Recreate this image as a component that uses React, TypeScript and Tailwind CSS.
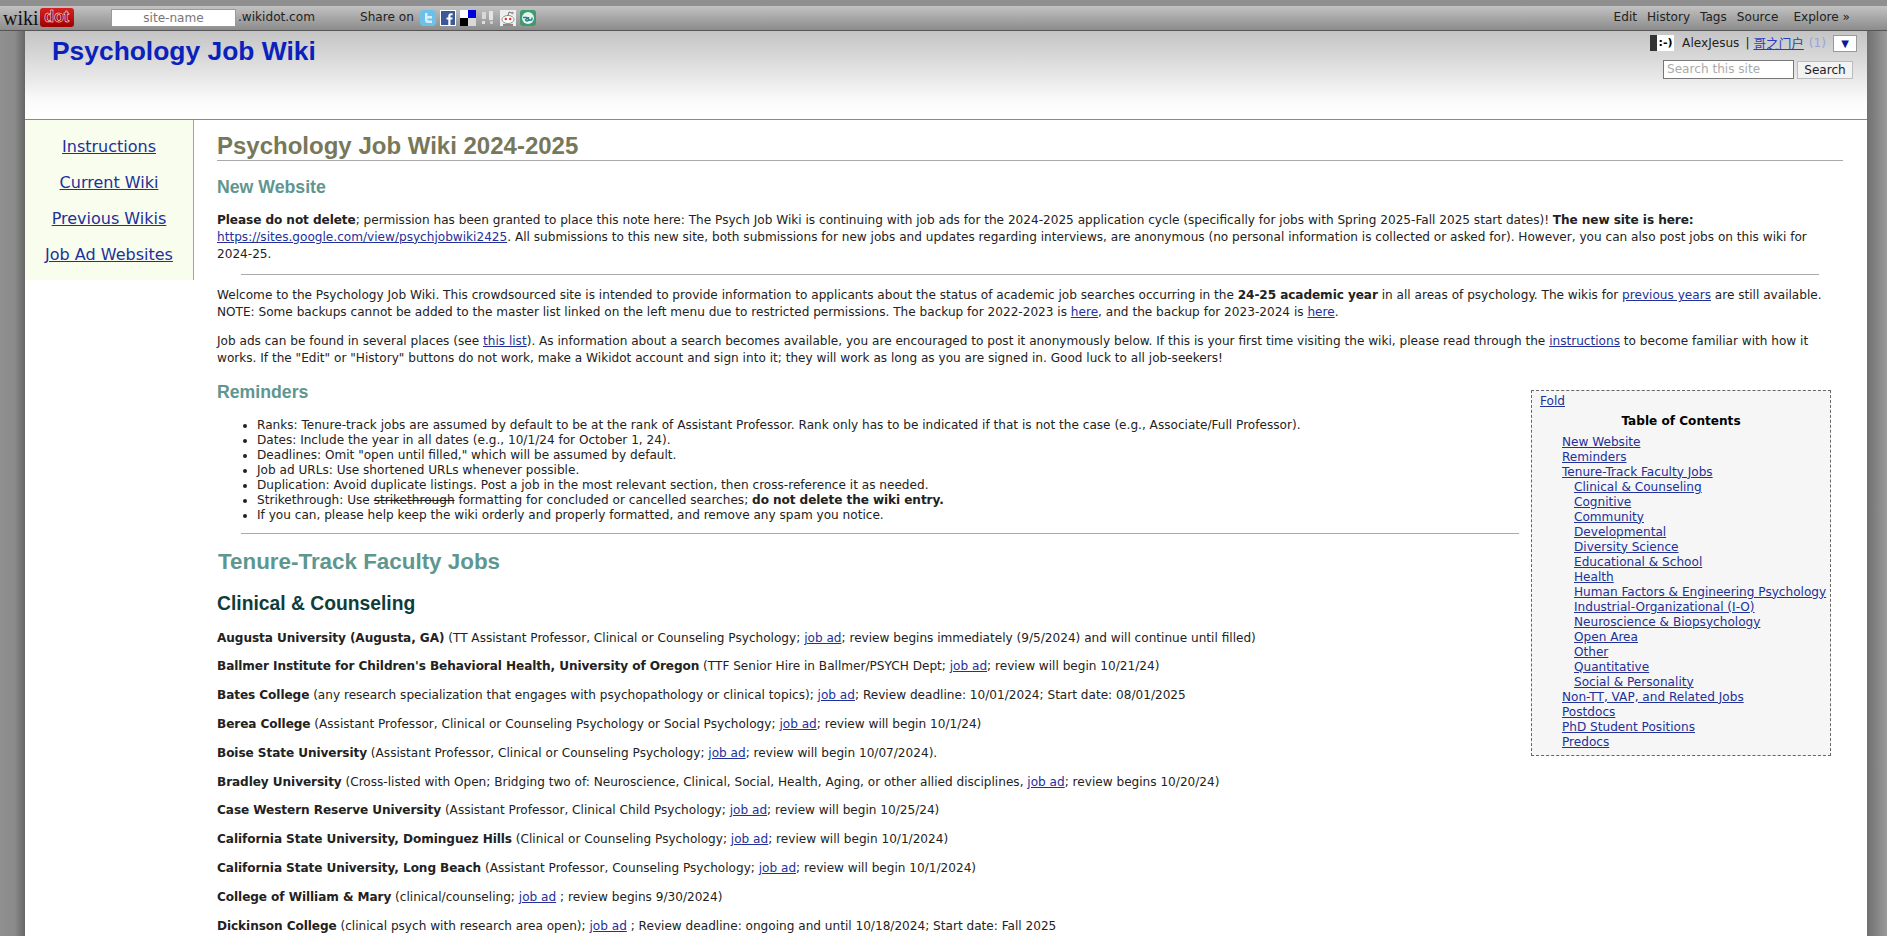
import React from "react";

const L = ({ children }: { children: React.ReactNode }) => (
  <a className="text-[#22309a] underline">{children}</a>
);

const B = ({ children }: { children: React.ReactNode }) => (
  <b className="tracking-[-0.080px]">{children}</b>
);

const jobs: [string, string, string][] = [
  ["Augusta University (Augusta, GA)", " (TT Assistant Professor, Clinical or Counseling Psychology; ", "; review begins immediately (9/5/2024) and will continue until filled)"],
  ["Ballmer Institute for Children's Behavioral Health, University of Oregon", " (TTF Senior Hire in Ballmer/PSYCH Dept; ", "; review will begin 10/21/24)"],
  ["Bates College", " (any research specialization that engages with psychopathology or clinical topics); ", "; Review deadline: 10/01/2024; Start date: 08/01/2025"],
  ["Berea College", " (Assistant Professor, Clinical or Counseling Psychology or Social Psychology; ", "; review will begin 10/1/24)"],
  ["Boise State University", " (Assistant Professor, Clinical or Counseling Psychology; ", "; review will begin 10/07/2024)."],
  ["Bradley University", " (Cross-listed with Open; Bridging two of: Neuroscience, Clinical, Social, Health, Aging, or other allied disciplines, ", "; review begins 10/20/24)"],
  ["Case Western Reserve University", " (Assistant Professor, Clinical Child Psychology; ", "; review will begin 10/25/24)"],
  ["California State University, Dominguez Hills", " (Clinical or Counseling Psychology; ", "; review will begin 10/1/2024)"],
  ["California State University, Long Beach", " (Assistant Professor, Counseling Psychology; ", "; review will begin 10/1/2024)"],
  ["College of William & Mary", " (clinical/counseling; ", " ; review begins 9/30/2024)"],
  ["Dickinson College", " (clinical psych with research area open); ", " ; Review deadline: ongoing and until 10/18/2024; Start date: Fall 2025"],
];

const toc: [string, boolean][] = [
  ["New Website", false], ["Reminders", false], ["Tenure-Track Faculty Jobs", false],
  ["Clinical & Counseling", true], ["Cognitive", true], ["Community", true], ["Developmental", true],
  ["Diversity Science", true], ["Educational & School", true], ["Health", true],
  ["Human Factors & Engineering Psychology", true], ["Industrial-Organizational (I-O)", true],
  ["Neuroscience & Biopsychology", true], ["Open Area", true], ["Other", true], ["Quantitative", true],
  ["Social & Personality", true], ["Non-TT, VAP, and Related Jobs", false], ["Postdocs", false],
  ["PhD Student Positions", false], ["Predocs", false],
];

const sans = "font-['Liberation_Sans',Arial,sans-serif]";

const ShareIcons = () => (
  <div className="flex items-center gap-1">
    <svg width="16" height="16" viewBox="0 0 16 16">
      <rect width="16" height="16" rx="4" fill="#6cc0ea" />
      <path d="M5 3v7c0 2 1 3 3 3h4v-2.500H8.500C7.800 10.500 7.500 10 7.500 9.500V8.500H12V6H7.500V3z" fill="#d8f0fb" />
    </svg>
    <svg width="16" height="16" viewBox="0 0 16 16">
      <rect width="16" height="16" fill="#fff" />
      <rect x="1" y="1" width="14" height="14" fill="#3b5998" />
      <path d="M10.500 15V9.500h1.800l.3-2h-2.100V6.200c0-.6.2-1 1-1h1.100V3.300c-.2 0-.8-.1-1.600-.1-1.600 0-2.700 1-2.700 2.800v1.500H6.500v2h1.800V15z" fill="#fff" />
    </svg>
    <svg width="16" height="16" viewBox="0 0 16 16">
      <rect x="8" y="0" width="8" height="8" fill="#0000dd" />
      <rect x="0" y="8" width="8" height="8" fill="#000" />
      <rect x="0" y="0" width="8" height="8" fill="#fff" />
      <rect x="8" y="8" width="8" height="8" fill="#d8d8d8" />
    </svg>
    <svg width="16" height="16" viewBox="0 0 16 16">
      <rect x="2" y="2" width="4" height="7" fill="#d8d8d8" />
      <rect x="9" y="1" width="4" height="9" fill="#e4e4e4" />
      <rect x="2" y="11" width="3" height="3" fill="#ddd" />
      <rect x="10" y="11" width="3" height="3" fill="#ccc" />
    </svg>
    <svg width="16" height="16" viewBox="0 0 16 16">
      <rect width="16" height="16" fill="#eee" />
      <ellipse cx="8" cy="9.500" rx="6" ry="4" fill="#fff" stroke="#777" strokeWidth="0.800" />
      <circle cx="5.800" cy="9" r="1.200" fill="#d4321c" />
      <circle cx="10.200" cy="9" r="1.200" fill="#d4321c" />
      <path d="M8 5.500 9 2l3 1" stroke="#555" fill="none" strokeWidth="0.800" />
      <circle cx="12.500" cy="3" r="1.200" fill="#999" />
      <path d="M3 14h10v2H3z" fill="#888" />
    </svg>
    <svg width="16" height="16" viewBox="0 0 16 16">
      <rect width="16" height="16" rx="3" fill="#3f9a6e" />
      <circle cx="8" cy="8" r="6" fill="#e4f4ee" />
      <path d="M3 7.500h3.500c.8 0 .8 1 0 1.500C5 10 5.500 11 7 11c1 0 1.500-1 1.500-2V7M8.500 7v2c0 1.500 3.500 1.500 3.500 0V7.500" stroke="#2a7f8f" strokeWidth="1.500" fill="none" />
    </svg>
  </div>
);

export default function App() {
  return (
    <div className="h-screen overflow-hidden flex flex-col bg-[#8a8a8a] font-['DejaVu_Sans',Verdana,sans-serif] text-[12.100px] text-[#222]">
      <div className="h-[6px] shrink-0 bg-[#8f8f8f]" />
      <div className="h-[25px] shrink-0 flex items-center bg-gradient-to-b from-[#c2c2c2] to-[#8c8c8c] border-b border-[#555] pb-[1px] text-[#222]">
        <div className="flex items-center w-[111px] pl-[3px] shrink-0">
          <span className="font-['Liberation_Serif',serif] text-[20px] leading-none text-[#111]">wiki</span>
          <span className="ml-[1px] h-[19px] w-[34px] rounded-[3px] bg-gradient-to-b from-[#d42020] to-[#a00000] text-[#a80000] [-webkit-text-stroke:0.500px_#ffffff] text-[16px] leading-[18px] font-bold text-center font-['Liberation_Sans',sans-serif]">dot</span>
        </div>
        <div className="w-[125px] h-[18px] bg-white border border-[#999] text-center leading-[16px] text-[#777] shrink-0">site-name</div>
        <span className="ml-[2px] w-[122px] shrink-0">.wikidot.com</span>
        <span className="mr-[6px] shrink-0">Share on</span>
        <ShareIcons />
        <div className="ml-auto flex items-center gap-[10px] pr-[37px]">
          <span>Edit</span>
          <span>History</span>
          <span>Tags</span>
          <span>Source</span>
          <span className="ml-[5px]">Explore »</span>
        </div>
      </div>

      <div className="flex-1 min-h-0 flex">
        <div className="w-[25px] shrink-0 bg-gradient-to-r from-[#909090] via-[#8a8a8a] via-[60%] to-[#666]" />
        <div className="flex-1 min-w-0 bg-white flex flex-col">
          <div className="h-[89px] shrink-0 flex justify-between border-b border-[#888] bg-gradient-to-b from-[#c4c4c4] via-[#fbfbfb] via-[80%] to-white">
            <div className={`${sans} font-bold text-[26.400px] leading-[32px] text-[#0a22bb] pl-[27px] pt-[4px]`}>Psychology Job Wiki</div>
            <div className="flex flex-col items-end pr-[10px] pt-[3px]">
              <div className="flex items-center h-[18px]">
                <span className="w-[7px] h-[16px] bg-[#333]" />
                <span className="w-[17px] h-[16px] bg-white text-center leading-[15px] font-bold text-[11px] text-black">:-)</span>
                <span className="ml-[8px]">AlexJesus</span>
                <span className="ml-[6px] mr-[4px]">|</span>
                <a className="text-[#2a3cc0] underline text-[12.600px] font-['Noto_Sans_CJK_SC',sans-serif]">哥之门户</a>
                <span className="ml-[5px] text-[#9aa2dc]">(1)</span>
                <span className="ml-[7px] w-[24px] h-[17px] bg-white border border-[#999] flex items-center justify-center text-[#0a1a9a] text-[10px]">▼</span>
              </div>
              <div className="flex items-center mt-[8px] mr-[4px]">
                <div className="w-[131px] h-[19px] bg-white border border-[#777] text-[#aaa] leading-[17px] pl-[3px]">Search this site</div>
                <div className="ml-[3px] h-[18px] w-[56px] bg-[#f3f3f3] border border-[#bbb] text-center leading-[16px]">Search</div>
              </div>
            </div>
          </div>

          <div className="flex-1 min-h-0 flex items-start">
            <div className="w-[169px] h-[160px] shrink-0 bg-[#f8fdee] border-r border-[#a5a97a] flex flex-col items-center pt-[16px] gap-[15px] text-[16px] leading-[21px]">
              <L>Instructions</L>
              <L>Current Wiki</L>
              <L>Previous Wikis</L>
              <L>Job Ad Websites</L>
            </div>
            <div className="flex-1 min-w-0 pl-[23px] pr-[24px] leading-[16.800px]">
              <h1 className={`${sans} mt-[12px] font-bold text-[24px] leading-[28px] text-[#77775a] border-b border-[#aaa]`}>Psychology Job Wiki 2024-2025</h1>
              <h2 className={`${sans} mt-[14px] font-bold text-[17.700px] leading-[24px] text-[#5e9690]`}>New Website</h2>
              <p className="mt-[13px]">
                <B>Please do not delete</B>; permission has been granted to place this note here: The Psych Job Wiki is continuing with job ads for the 2024-2025 application cycle (specifically for jobs with Spring 2025-Fall 2025 start dates)! <B>The new site is here:</B> <L>https://sites.google.com/view/psychjobwiki2425</L>. All submissions to this new site, both submissions for new jobs and updates regarding interviews, are anonymous (no personal information is collected or asked for). However, you can also post jobs on this wiki for 2024&#8209;25.
              </p>
              <hr className="mx-[24px] mt-[12px] border-[#aaa]" />
              <p className="mt-[12px]">
                Welcome to the Psychology Job Wiki. This crowdsourced site is intended to provide information to applicants about the status of academic job searches occurring in the <B>24-25 academic year</B> in all areas of psychology. The wikis for <L>previous years</L> are still available. NOTE: Some backups cannot be added to the master list linked on the left menu due to restricted permissions. The backup for 2022-2023 is <L>here</L>, and the backup for 2023-2024 is <L>here</L>.
              </p>
              <p className="mt-[12px]">
                Job ads can be found in several places (see <L>this list</L>). As information about a search becomes available, you are encouraged to post it anonymously below. If this is your first time visiting the wiki, please read through the <L>instructions</L> to become familiar with how it works. If the "Edit" or "History" buttons do not work, make a Wikidot account and sign into it; they will work as long as you are signed in. Good luck to all job-seekers!
              </p>

              <div className="float-right w-[300px] ml-[12px] mt-[23px] mr-[12px] h-[366px] bg-[#f6f6f6] border border-dashed border-[#666] leading-[15px] pl-[8px] pt-[3px]">
                <L>Fold</L>
                <div className="text-center font-bold text-black mt-[5px] pr-[8px]">Table of Contents</div>
                <div className="mt-[6px] pl-[22px] flex flex-col items-start">
                  {toc.map(([t, sub]) => (
                    <div key={t} className={sub ? "pl-[12px]" : ""}><L>{t}</L></div>
                  ))}
                </div>
              </div>

              <h2 className={`${sans} mt-[13px] font-bold text-[17.700px] leading-[24px] text-[#5e9690]`}>Reminders</h2>
              <ul className="mt-[14px] pl-[40px] list-disc leading-[15px]">
                <li>Ranks: Tenure-track jobs are assumed by default to be at the rank of Assistant Professor. Rank only has to be indicated if that is not the case (e.g., Associate/Full Professor).</li>
                <li>Dates: Include the year in all dates (e.g., 10/1/24 for October 1, 24).</li>
                <li>Deadlines: Omit "open until filled," which will be assumed by default.</li>
                <li>Job ad URLs: Use shortened URLs whenever possible.</li>
                <li>Duplication: Avoid duplicate listings. Post a job in the most relevant section, then cross-reference it as needed.</li>
                <li>Strikethrough: Use <s>strikethrough</s> formatting for concluded or cancelled searches; <B>do not delete the wiki entry.</B></li>
                <li>If you can, please help keep the wiki orderly and properly formatted, and remove any spam you notice.</li>
              </ul>
              <hr className="ml-[24px] mt-[10px] border-[#aaa] overflow-hidden" />
              <h1 className={`${sans} mt-[12px] pl-[1px] font-bold text-[22.400px] leading-[32px] text-[#5e9690]`}>Tenure-Track Faculty Jobs</h1>
              <h2 className={`${sans} mt-[12px] font-bold text-[19.300px] leading-[28px] text-[#0f3d3a]`}>Clinical &amp; Counseling</h2>
              {jobs.map(([b, mid, end]) => (
                <p key={b} className="mt-[12px]">
                  <B>{b}</B>{mid}<L>job ad</L>{end}
                </p>
              ))}
            </div>
          </div>
        </div>
        <div className="w-[20px] shrink-0 bg-gradient-to-r from-[#707070] to-[#9a9a9a]" />
      </div>
    </div>
  );
}
